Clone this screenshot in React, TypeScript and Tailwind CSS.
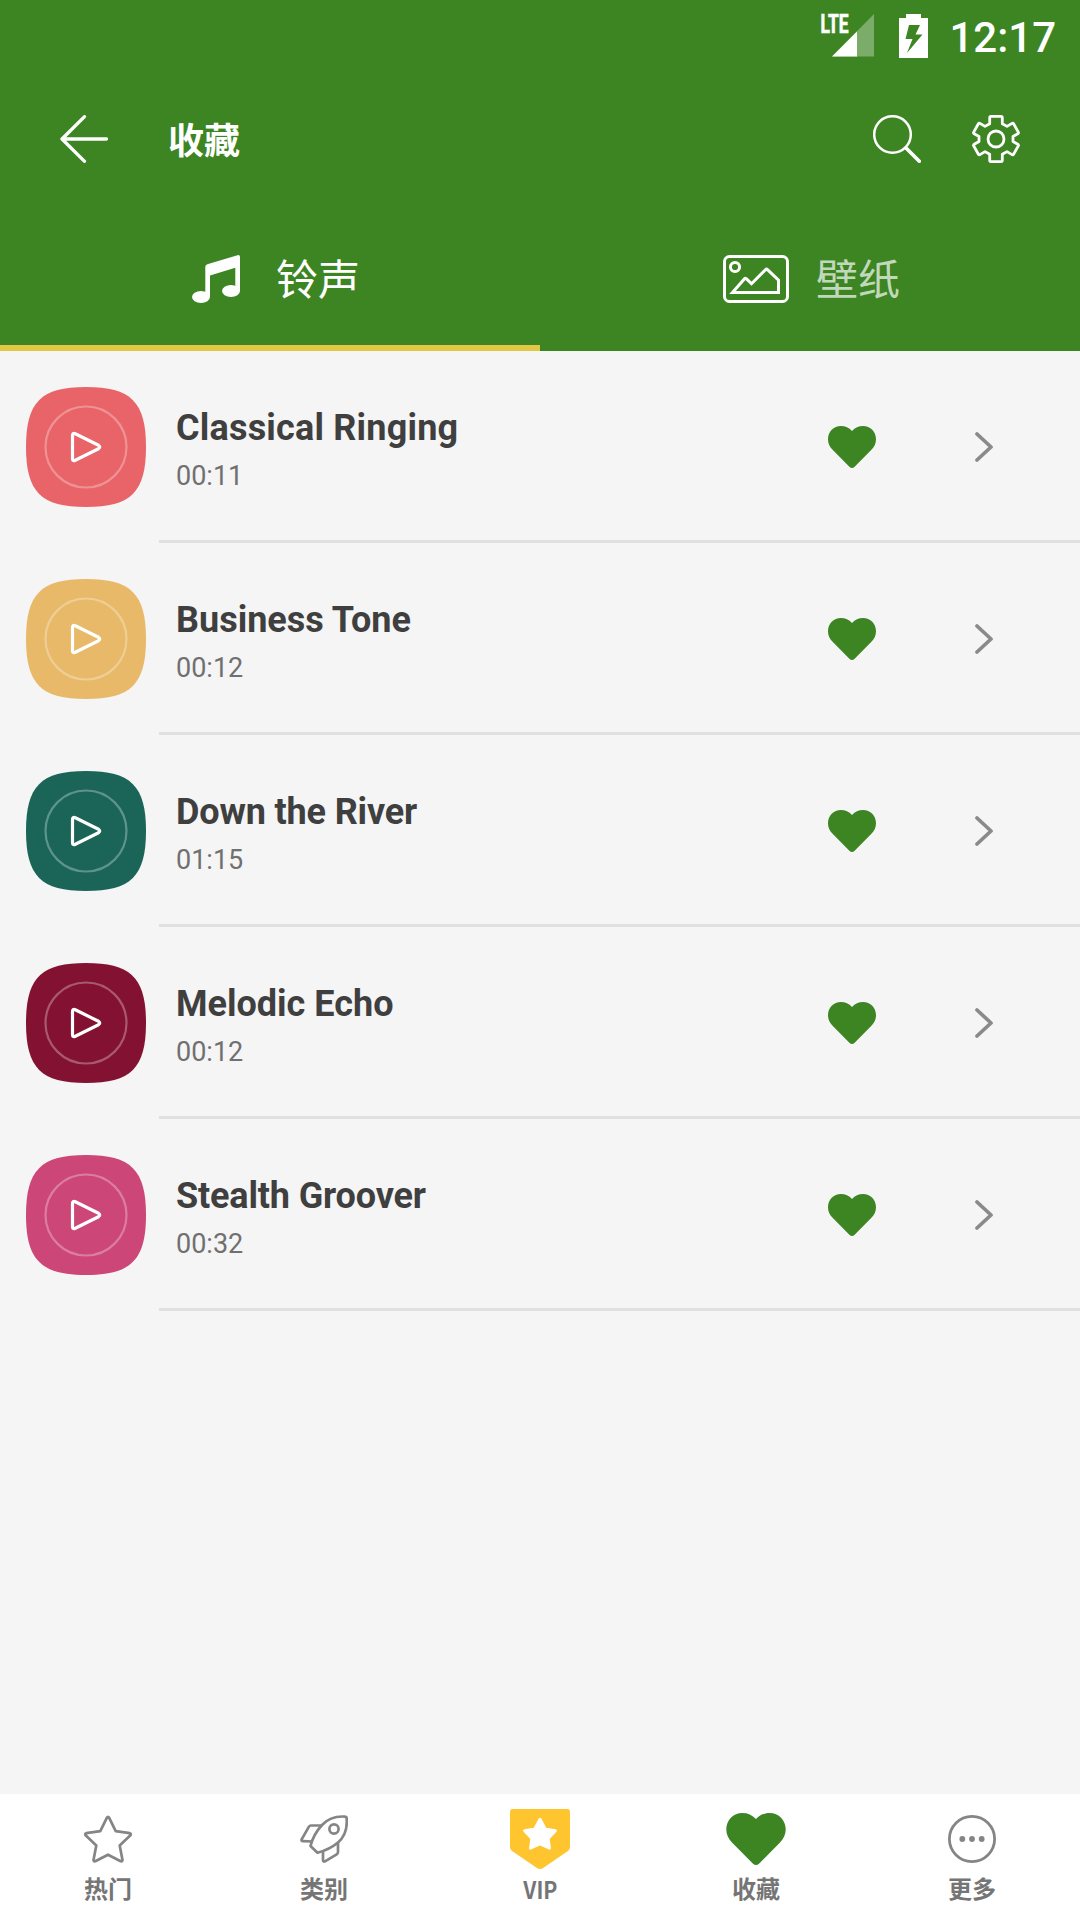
import type { ReactNode } from 'react'

interface Ringtone {
  id: number
  title: string
  duration: string
  color: string
  tracking?: string
}

const RINGTONES: Ringtone[] = [
  { id: 1, title: 'Classical Ringing', duration: '00:11', color: 'fill-[#e86469]', tracking: 'tracking-[0.2px]' },
  { id: 2, title: 'Business Tone', duration: '00:12', color: 'fill-[#e8b968]' },
  { id: 3, title: 'Down the River', duration: '01:15', color: 'fill-[#1a6558]', tracking: 'tracking-[-0.15px]' },
  { id: 4, title: 'Melodic Echo', duration: '00:12', color: 'fill-[#831232]' },
  { id: 5, title: 'Stealth Groover', duration: '00:32', color: 'fill-[#cc4678]', tracking: 'tracking-[-0.15px]' },
]

function StatusBar() {
  return (
    <div className="flex h-[72px] items-center justify-end pr-6">
      <svg width="54" height="60" viewBox="0 -8 54 60" className="mr-[25px]">
        <path d="M54 0V42.500H12Z" fill="#fff" opacity="0.32" />
        <path d="M37 17.500V42.500H12Z" fill="#fff" />
        <text
          x="0.500"
          y="19"
          fill="#fff"
          stroke="#fff"
          strokeWidth="0.700"
          fontSize="25.500"
          fontWeight="700"
          fontFamily="Roboto, sans-serif"
          textLength="28"
          lengthAdjust="spacingAndGlyphs"
        >
          LTE
        </text>
      </svg>
      <svg width="29" height="44" viewBox="0 0 29 44" className="mr-[21px]">
        <path
          fillRule="evenodd"
          d="M7 0h15v4h7v40H0V4h7ZM10 11 6.500 25h7L8 39 23.500 20.500h-7L21 11Z"
          fill="#fff"
        />
      </svg>
      <span className="pt-[4px] text-[42px] leading-none font-medium">12:17</span>
    </div>
  )
}

function BackIcon() {
  return (
    <svg width="48" height="48" viewBox="0 0 48 48" fill="none" stroke="currentColor" strokeWidth="3.300" strokeLinecap="round" strokeLinejoin="round">
      <path d="M46.500 24H2M24.500 1.700 2 24l22.500 22.300" />
    </svg>
  )
}

function SearchIcon() {
  return (
    <svg width="48" height="48" viewBox="0 0 48 48" fill="none" stroke="currentColor">
      <circle cx="19.500" cy="19.500" r="18.300" strokeWidth="2.500" />
      <path d="m33 33 13.300 13.300" strokeWidth="3.600" strokeLinecap="round" />
    </svg>
  )
}

function GearIcon() {
  return (
    <svg width="48" height="48" viewBox="0 0 48 48" fill="none" stroke="currentColor" strokeWidth="2.800" strokeLinejoin="round">
      <path d="M19 1.400h10q1.300 0 1.300 1.300v6l4.700 2.700 5-3q1-.6 1.600.4l4.700 8.300q.5 1-.5 1.600l-4.800 2.800v5l4.800 2.800q1 .6.5 1.600l-4.700 8.300q-.6 1-1.600.4l-5-3-4.700 2.700v6q0 1.300-1.300 1.300H19q-1.300 0-1.300-1.300v-6L13 36.600l-5 3q-1 .6-1.600-.4l-4.700-8.300q-.5-1 .5-1.600L7 26.500v-5l-4.800-2.800q-1-.6-.5-1.600l4.700-8.300q.6-1 1.600-.4l5 3 4.700-2.700v-6q0-1.300 1.300-1.300Z" />
      <circle cx="24" cy="24" r="8" />
    </svg>
  )
}

function MusicIcon() {
  return (
    <svg width="66" height="48" viewBox="-9 0 66 48" fill="currentColor">
      <path d="M13.300 12q0-2 2-2.700L45.500.2Q48 -.3 48 2v34h-4.700V12.700L18 20.500V42h-4.700Z" />
      <ellipse cx="9" cy="42" rx="9" ry="6" />
      <ellipse cx="39" cy="36" rx="9" ry="6" />
    </svg>
  )
}

function PictureIcon() {
  return (
    <svg width="66" height="48" viewBox="0 0 66 48" fill="none" stroke="currentColor" strokeWidth="3">
      <rect x="1.500" y="1.500" width="63" height="45" rx="5" />
      <circle cx="12" cy="12" r="4.600" />
      <path d="M9.500 37.500 21.500 23.700q.8-.9 1.700 0l5.300 5L42.500 14.700q1-1 2 0l11 10.500v12.300Z" />
    </svg>
  )
}

function PlayBadge({ color }: { color: string }) {
  return (
    <svg width="120" height="120" viewBox="0 0 120 120" fill="none">
      <path d="M0 60C0 15 15 0 60 0s60 15 60 60-15 60-60 60S0 105 0 60Z" className={color} />
      <circle cx="60" cy="60" r="40.500" stroke="#fff" strokeOpacity="0.3" strokeWidth="2.200" />
      <path
        d="M46.500 48.500q0-3 2.800-1.700L72.500 58.300q2.500 1.700 0 3.400L49.300 73.200q-2.800 1.300-2.800-1.700Z"
        stroke="#fff"
        strokeWidth="3.200"
        strokeLinejoin="round"
      />
    </svg>
  )
}

function HeartIcon({ className }: { className: string }) {
  return (
    <svg viewBox="0 0 48 42" fill="#3d8523" className={className}>
      <path d="M24 4.900C21 1.600 17.300 0 13 0 5.500 0 0 5.800 0 13.200c0 4.200 1.600 7.400 4.600 10.600L21.600 41q2.400 2 4.800 0L43.400 23.800c3-3.200 4.600-6.400 4.600-10.600C48 5.800 42.500 0 35 0 30.700 0 27 1.600 24 4.900Z" />
    </svg>
  )
}

function ChevronIcon() {
  return (
    <svg width="18" height="30" viewBox="0 0 18 30" fill="none" stroke="#8a8a8a" strokeWidth="3.700" strokeLinecap="round" strokeLinejoin="round">
      <path d="m2 2 14 13L2 28" />
    </svg>
  )
}

function StarIcon() {
  return (
    <svg width="48" height="48" viewBox="0 0 48 48" fill="none" stroke="#858585" strokeWidth="2.700" strokeLinejoin="round">
      <path d="M22.800 2.800q1.200-1.800 2.400 0l6.500 13.400 14 2q1.800.6.700 2.100L35.700 30.500 38.500 45q0 1.800-1.800 1.300L24 39.700l-12.700 6.600q-1.800.5-1.800-1.300l2.800-14.500L1.600 20.300q-1.100-1.500.7-2.100l14-2Z" />
    </svg>
  )
}

function RocketIcon() {
  return (
    <svg width="48" height="48" viewBox="0 0 48 48" fill="none" stroke="#858585" strokeWidth="2.700" strokeLinejoin="round">
      <path d="M45 1.600q1.500 0 1.600 1.500C47.500 13 45.500 21 38 27.500c-6 5-12 8-20.500 10.300L10.500 31C12.500 23 16 16.500 22 10 28.500 3 36 1 45 1.600Z" />
      <circle cx="34" cy="14" r="4.600" />
      <path d="M22.500 10.500H11q-1.400 0-2.200 1.400l-7 12.200q-.8 2 1 2l9.700.4M38 27v10q0 1.500-1.300 2.300L25 46.300q-2 .8-2-1.200v-9" />
    </svg>
  )
}

function VipIcon() {
  return (
    <svg width="60" height="60" viewBox="0 0 60 60">
      <path d="M3 0h54q3 0 3 3v35q0 2.500-2 4L33 59q-3 2-6 0L2 42q-2-1.500-2-4V3q0-3 3-3Z" fill="#fec52e" />
      <path d="M28.500 9.800q1.500-2.300 3 0l4.700 9 9.600 1.500q2 .8.700 2.400L39.700 30 41 39.300q-.2 1.800-2 1.200L30 36.400l-9 4.100q-1.800.6-2-1.200L20.300 30l-6.800-7.300q-1.300-1.600.7-2.400l9.600-1.500Z" fill="#fff" />
    </svg>
  )
}

function MoreIcon() {
  return (
    <svg width="48" height="48" viewBox="0 0 48 48" fill="#858585">
      <circle cx="24" cy="24" r="22.600" fill="none" stroke="#858585" strokeWidth="2.800" />
      <circle cx="14.300" cy="24" r="2.900" />
      <circle cx="24" cy="24" r="2.900" />
      <circle cx="33.700" cy="24" r="2.900" />
    </svg>
  )
}

function RingtoneRow({ ringtone }: { ringtone: Ringtone }) {
  return (
    <li className="flex h-48 pl-[26px]">
      <div className="flex w-[133px] items-center">
        <PlayBadge color={ringtone.color} />
      </div>
      <div className="flex flex-1 items-center border-b-[3px] border-[#e0e0e0] pt-[3px] pr-[87px] pl-[17px]">
        <div className="flex-1 pt-[6px]">
          <h2 className={`text-[36px] leading-[44px] font-bold text-[#3f3f3f] ${ringtone.tracking ?? ''}`}>
            {ringtone.title}
          </h2>
          <p className="mt-2 text-[27px] leading-9 text-[#707070]">{ringtone.duration}</p>
        </div>
        <button className="mr-[99px]">
          <HeartIcon className="h-[42px] w-12" />
        </button>
        <ChevronIcon />
      </div>
    </li>
  )
}

function NavItem({ icon, label }: { icon: ReactNode; label: ReactNode }) {
  return (
    <button className="flex flex-1 flex-col items-center">
      <span className="flex h-[90px] items-center justify-center">{icon}</span>
      <span className="-mt-2 font-['Noto_Sans_CJK_SC',sans-serif] text-[24px] leading-6 font-bold text-[#757575]">{label}</span>
    </button>
  )
}

export default function App() {
  return (
    <div className="flex h-[1920px] w-[1080px] flex-col overflow-hidden bg-[#f5f5f5] font-['Roboto','Noto_Sans_CJK_SC',sans-serif]">
      <header className="h-[351px] bg-[#3d8523] text-white">
        <StatusBar />
        <div className="flex h-[134px] items-center px-[60px]">
          <BackIcon />
          <h1 className="ml-[60px] flex-1 pt-[5px] text-[36px] leading-none font-bold">收藏</h1>
          <SearchIcon />
          <span className="ml-[51px]">
            <GearIcon />
          </span>
        </div>
        <div className="flex h-[145px] text-[42px] leading-none">
          <button className="flex flex-1 items-center justify-center gap-[27px] border-b-[6px] border-[#e0c845] pt-[7px] pl-[3px]">
            <MusicIcon />
            <span className="pt-1">铃声</span>
          </button>
          <button className="flex flex-1 items-center justify-center gap-[27px] border-b-[6px] border-transparent pt-[7px] pl-[3px]">
            <PictureIcon />
            <span className="pt-1 text-white/70">壁纸</span>
          </button>
        </div>
      </header>

      <ul className="flex-1">
        {RINGTONES.map((ringtone) => (
          <RingtoneRow key={ringtone.id} ringtone={ringtone} />
        ))}
      </ul>

      <nav className="flex h-[126px] bg-white">
        <NavItem icon={<StarIcon />} label="热门" />
        <NavItem icon={<RocketIcon />} label="类别" />
        <NavItem icon={<VipIcon />} label={<span className="inline-block scale-x-[0.88] pt-px">VIP</span>} />
        <NavItem icon={<HeartIcon className="h-[52px] w-[60px]" />} label="收藏" />
        <NavItem icon={<MoreIcon />} label="更多" />
      </nav>
    </div>
  )
}
